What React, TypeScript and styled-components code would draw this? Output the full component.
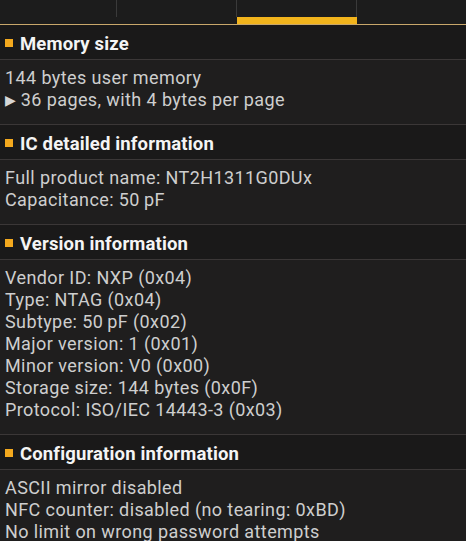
import React from "react";
import styled, { createGlobalStyle } from "styled-components";

const Global = createGlobalStyle`
  html, body { margin: 0; padding: 0; background: #1f1e1e; }
  body { width: 466px; height: 541px; overflow: hidden; font-family: Roboto, "Noto Sans", sans-serif; }
`;

const Page = styled.div`
  width: 466px;
  display: flex;
  flex-direction: column;
  background: #1f1e1e;
`;

const TabBar = styled.div`
  height: 24px;
  display: grid;
  grid-template-columns: 117px 120px 120px 1fr;
  background: #1c1c1c;
  border-bottom: 1px solid #c9a76b;
`;

const Tab = styled.div<{ $last?: boolean }>`
  position: relative;
  display: flex;
  flex-direction: column;
  justify-content: flex-end;
  &::after {
    content: "";
    position: absolute;
    right: 0;
    top: 0;
    height: 17px;
    width: 1px;
    background: ${(p) => (p.$last ? "transparent" : "#3a3a3a")};
  }
`;

const Indicator = styled.div`
  height: 7px;
  background: #f2b41c;
`;

const Section = styled.section`
  display: flex;
  flex-direction: column;
`;

const Header = styled.div<{ $first?: boolean }>`
  height: 34px;
  display: flex;
  align-items: center;
  gap: 7px;
  padding-left: 5px;
  background: #1a1919;
  border-top: ${(p) => (p.$first ? "none" : "1px solid #3b3737")};
  border-bottom: 1px solid #3b3737;
`;

const Bullet = styled.span`
  width: 8px;
  height: 8px;
  background: #f4a91e;
  flex: none;
  margin-top: 1px;
`;

const Title = styled.h2`
  margin: 0;
  padding-top: 3px;
  font-size: 18.5px;
  letter-spacing: 0.15px;
  line-height: 22px;
  font-weight: 700;
  color: #f4f4f4;
`;

const Body = styled.div`
  padding: 7px 5px 13px;
  display: flex;
  flex-direction: column;
`;

const Line = styled.div`
  font-size: 18px;
  letter-spacing: 0.4px;
  line-height: 22px;
  height: 22px;
  color: #cecece;
  white-space: nowrap;
`;

const Arrow = styled.span`
  display: inline-block;
  font-family: "DejaVu Sans", sans-serif;
  font-size: 14px;
  line-height: 0;
  margin-right: 5px;
  vertical-align: 1px;
  letter-spacing: 0;
  color: #d6d6d6;
`;

const sections: { title: string; lines: React.ReactNode[] }[] = [
  {
    title: "Memory size",
    lines: [
      "144 bytes user memory",
      <>
        <Arrow>▶</Arrow>36 pages, with 4 bytes per page
      </>,
    ],
  },
  {
    title: "IC detailed information",
    lines: ["Full product name: NT2H1311G0DUx", "Capacitance: 50\u2009pF"],
  },
  {
    title: "Version information",
    lines: [
      "Vendor ID: NXP (0x04)",
      "Type: NTAG (0x04)",
      "Subtype: 50\u2009pF (0x02)",
      "Major version: 1 (0x01)",
      "Minor version: V0 (0x00)",
      "Storage size: 144 bytes (0x0F)",
      "Protocol: ISO/IEC 14443-3 (0x03)",
    ],
  },
  {
    title: "Configuration information",
    lines: [
      "ASCII mirror disabled",
      "NFC counter: disabled (no tearing: 0xBD)",
      "No limit on wrong password attempts",
    ],
  },
];

export default function App() {
  return (
    <Page>
      <Global />
      <TabBar>
        <Tab />
        <Tab />
        <Tab>
          <Indicator />
        </Tab>
        <Tab $last />
      </TabBar>
      {sections.map((s, i) => (
        <Section key={s.title}>
          <Header $first={i === 0}>
            <Bullet />
            <Title>{s.title}</Title>
          </Header>
          <Body>
            {s.lines.map((l, j) => (
              <Line key={j}>{l}</Line>
            ))}
          </Body>
        </Section>
      ))}
    </Page>
  );
}
